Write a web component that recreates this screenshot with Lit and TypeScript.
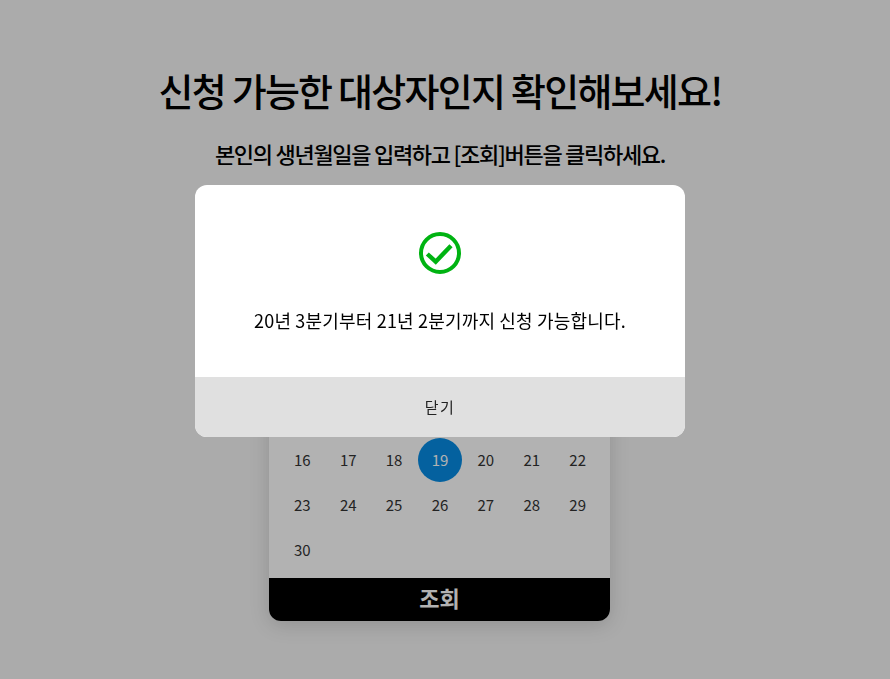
import { LitElement, html, css } from 'lit';
import { customElement } from 'lit/decorators.js';

// the first weeks of the month sit behind the modal, only these stay visible
const weeks = [
  ['16', '17', '18', '19', '20', '21', '22'],
  ['23', '24', '25', '26', '27', '28', '29'],
  ['30', '', '', '', '', '', ''],
];

@customElement('app-root')
export class AppRoot extends LitElement {
  static styles = css`
    :host {
      display: block;
      font-family: 'Noto Sans CJK KR', 'Noto Sans', sans-serif;
      color: #000;
    }
    .page {
      height: 679px;
      box-sizing: border-box;
      overflow: hidden;
      background: #f5f5f5;
      display: flex;
      flex-direction: column;
      align-items: center;
      padding: 62px 10px 0 0;
    }
    h1 {
      margin: 0;
      font-size: 38px;
      line-height: 56px;
      font-weight: 500;
      letter-spacing: -1.75px;
    }
    .sub {
      margin: 19px 0 0;
      font-size: 22px;
      line-height: 32px;
      font-weight: 500;
      letter-spacing: -1.28px;
    }
    .card {
      margin: 231px 1px 0 0;
      width: 341px;
      padding-top: 37px;
      background: #fff;
      border-radius: 0 0 12px 12px;
      box-shadow: 0 4px 20px rgba(0, 0, 0, 0.15);
      overflow: hidden;
    }
    .grid {
      display: grid;
      grid-template-columns: repeat(7, 45.9px);
      grid-auto-rows: 45px;
      justify-content: center;
      padding-left: 1px;
      font-size: 15px;
      color: #333;
    }
    .cell {
      display: flex;
      align-items: center;
      justify-content: center;
    }
    .on {
      width: 44px;
      height: 44px;
      border-radius: 50%;
      background: #068ce4;
      color: #fff;
      display: flex;
      align-items: center;
      justify-content: center;
    }
    .submit {
      display: block;
      width: 100%;
      height: 43px;
      margin-top: 6px;
      border: 0;
      padding: 0 0 4px;
      background: #000;
      color: #fff;
      font: inherit;
      font-size: 22px;
      font-weight: 700;
      line-height: 39px;
    }
    .overlay {
      position: fixed;
      inset: 0;
      background: rgba(0, 0, 0, 0.3);
      display: flex;
      justify-content: center;
      align-items: flex-start;
      padding: 185px 10px 0 0;
    }
    .modal {
      width: 490px;
      height: 252px;
      border-radius: 12px;
      overflow: hidden;
      background: #fff;
      display: flex;
      flex-direction: column;
    }
    .body {
      flex: 1;
      display: flex;
      flex-direction: column;
      align-items: center;
      padding-top: 44px;
      box-sizing: border-box;
    }
    .body svg {
      display: block;
    }
    .body p {
      margin: 30px 0 0;
      font-size: 18px;
      line-height: 26px;
      letter-spacing: 0.18px;
    }
    .close {
      height: 60px;
      border: 0;
      padding: 0 0 2px;
      background: #e0e0e0;
      color: #222;
      font: inherit;
      font-size: 15px;
      letter-spacing: 1.5px;
    }
  `;

  render() {
    return html`
      <div class="page">
        <h1>신청 가능한 대상자인지 확인해보세요!</h1>
        <p class="sub">본인의 생년월일을 입력하고 [조회]버튼을 클릭하세요.</p>
        <div class="card">
          <div class="grid">
            ${weeks.flat().map(
              (d) => html`<div class="cell">
                ${d === '19' ? html`<span class="on">${d}</span>` : d}
              </div>`
            )}
          </div>
          <button class="submit">조회</button>
        </div>
      </div>
      <div class="overlay">
        <div class="modal">
          <div class="body">
            <svg width="48" height="48" viewBox="-24 -24 48 48" fill="none" stroke="#00b312">
              <circle r="19" stroke-width="4"></circle>
              <path d="M-12.7 1L-4.3 8.7L11 -7.3" stroke-width="4.4"></path>
            </svg>
            <p>20년 3분기부터 21년 2분기까지 신청 가능합니다.</p>
          </div>
          <button class="close">닫기</button>
        </div>
      </div>
    `;
  }
}
